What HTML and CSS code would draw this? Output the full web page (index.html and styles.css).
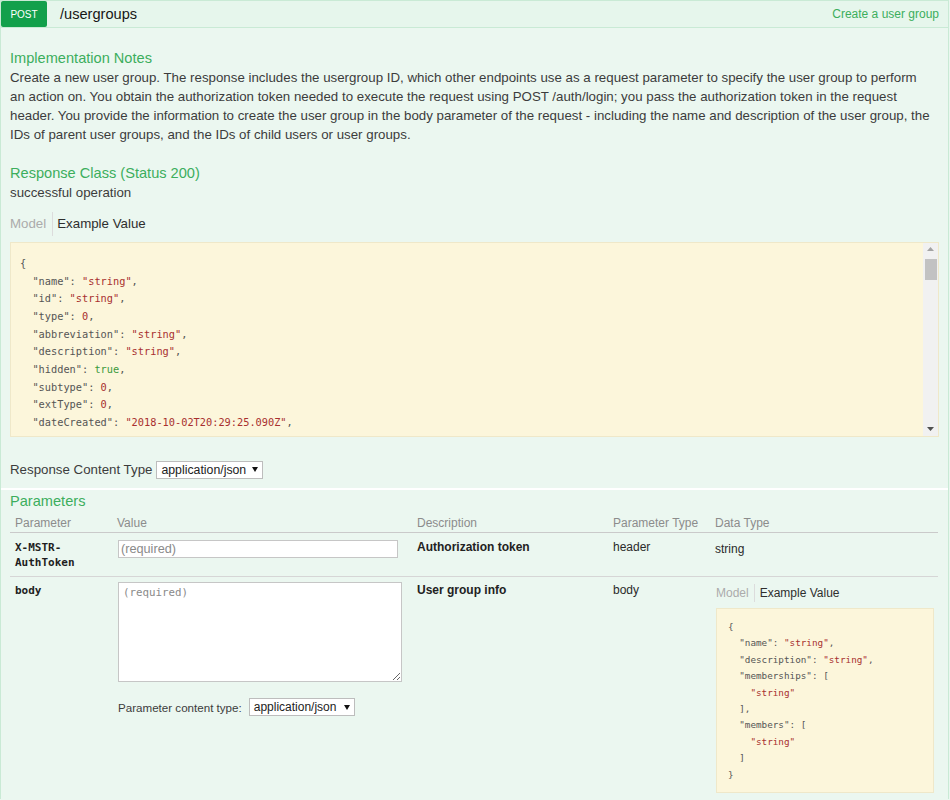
FILE: index.html
```html
<!DOCTYPE html>
<html lang="en">
<head>
<meta charset="utf-8">
<title>POST /usergroups</title>
<link rel="stylesheet" href="styles.css">
</head>
<body>
<div class="op">
  <div class="op-head">
    <span class="method">POST</span>
    <span class="path">/usergroups</span>
    <span class="summary">Create a user group</span>
  </div>

  <div class="op-body">
    <h4 class="sec-title first">Implementation Notes</h4>
    <p class="notes">Create a new user group. The response includes the usergroup ID, which other endpoints use as a request parameter to specify the user group to perform an action on. You obtain the authorization token needed to execute the request using POST /auth/login; you pass the authorization token in the request header. You provide the information to create the user group in the body parameter of the request - including the name and description of the user group, the IDs of parent user groups, and the IDs of child users or user groups.</p>

    <h4 class="sec-title">Response Class (Status 200)</h4>
    <div class="resp-msg">successful operation</div>

    <div class="tabs">
      <span class="tab tab-off">Model</span>
      <span class="tab tab-on">Example Value</span>
    </div>

    <div class="snippet snippet-lg">
      <div class="code">
        <span class="ln">{</span>
        <span class="ln in1"><span class="k">"name"</span>: <span class="s">"string"</span>,</span>
        <span class="ln in1"><span class="k">"id"</span>: <span class="s">"string"</span>,</span>
        <span class="ln in1"><span class="k">"type"</span>: <span class="s">0</span>,</span>
        <span class="ln in1"><span class="k">"abbreviation"</span>: <span class="s">"string"</span>,</span>
        <span class="ln in1"><span class="k">"description"</span>: <span class="s">"string"</span>,</span>
        <span class="ln in1"><span class="k">"hidden"</span>: <span class="b">true</span>,</span>
        <span class="ln in1"><span class="k">"subtype"</span>: <span class="s">0</span>,</span>
        <span class="ln in1"><span class="k">"extType"</span>: <span class="s">0</span>,</span>
        <span class="ln in1"><span class="k">"dateCreated"</span>: <span class="s">"2018-10-02T20:29:25.090Z"</span>,</span>
        <span class="ln in1"><span class="k">"dateModified"</span>: <span class="s">"2018-10-02T20:29:25.090Z"</span>,</span>
      </div>
      <div class="vscroll">
        <svg class="arrow-up" width="7" height="4" viewBox="0 0 7 4"><path d="M0 4 L3.5 0 L7 4 Z" fill="#a3a3a3"/></svg>
        <div class="thumb"></div>
        <div class="track-fill"></div>
        <svg class="arrow-down" width="7" height="4" viewBox="0 0 7 4"><path d="M0 0 L7 0 L3.5 4 Z" fill="#505050"/></svg>
      </div>
    </div>

    <div class="ctype-row">
      <span>Response Content Type</span>
      <span class="fselect"><span>application/json</span><svg width="6" height="5" viewBox="0 0 6 5"><path d="M0 0 L6 0 L3 5 Z" fill="#111"/></svg></span>
    </div>
  </div>

  <div class="params">
    <h4 class="sec-title">Parameters</h4>
    <div class="ptable">
      <div class="prow phead">
        <div class="cell">Parameter</div>
        <div class="cell">Value</div>
        <div class="cell">Description</div>
        <div class="cell">Parameter Type</div>
        <div class="cell">Data Type</div>
      </div>

      <div class="prow prow-1">
        <div class="cell pname"><span class="ln">X-MSTR-</span><span class="ln">AuthToken</span></div>
        <div class="cell"><input class="pinput" type="text" placeholder="(required)"></div>
        <div class="cell pdesc">Authorization token</div>
        <div class="cell ptext">header</div>
        <div class="cell ptext ptype">string</div>
      </div>

      <div class="prow prow-2">
        <div class="cell pname">body</div>
        <div class="cell">
          <textarea class="pbody" placeholder="(required)"></textarea>
          <div class="pctype">
            <span>Parameter content type:</span>
            <span class="fselect fselect-sm"><span>application/json</span><svg width="6" height="5" viewBox="0 0 6 5"><path d="M0 0 L6 0 L3 5 Z" fill="#111"/></svg></span>
          </div>
        </div>
        <div class="cell pdesc">User group info</div>
        <div class="cell ptext">body</div>
        <div class="cell dtype">
          <div class="tabs tabs-sm">
            <span class="tab tab-off">Model</span>
            <span class="tab tab-on">Example Value</span>
          </div>
          <div class="snippet snippet-sm">
            <div class="code code-sm">
              <span class="ln">{</span>
              <span class="ln in1"><span class="k">"name"</span>: <span class="s">"string"</span>,</span>
              <span class="ln in1"><span class="k">"description"</span>: <span class="s">"string"</span>,</span>
              <span class="ln in1"><span class="k">"memberships"</span>: [</span>
              <span class="ln in2"><span class="s">"string"</span></span>
              <span class="ln in1">],</span>
              <span class="ln in1"><span class="k">"members"</span>: [</span>
              <span class="ln in2"><span class="s">"string"</span></span>
              <span class="ln in1">]</span>
              <span class="ln">}</span>
            </div>
          </div>
        </div>
      </div>
    </div>
  </div>
</div>
</body>
</html>
```

FILE: styles.css
```css
html, body {
  margin: 0;
  padding: 0;
  background: #ebf7f0;
}

body {
  font-family: "Liberation Sans", Arial, sans-serif;
  color: #3c3c3c;
}

.op {
  width: 949px;
  box-sizing: border-box;
  border: 1px solid #c9ead5;
  border-bottom: none;
  background: #ebf7f0;
}

/* ---------- heading bar ---------- */
.op-head {
  display: flex;
  align-items: center;
  height: 26px;
  background: #e6f6ec;
  border-bottom: 1px solid #c9ead5;
}

.method {
  width: 46px;
  height: 26px;
  display: flex;
  align-items: center;
  justify-content: center;
  background: #12a04b;
  color: #fff;
  font-size: 10px;
  border-radius: 2px;
}

.path {
  margin-left: 13px;
  font-size: 14.6px;
  color: #161616;
}

.summary {
  margin-left: auto;
  margin-right: 9px;
  font-size: 12px;
  color: #3cae5d;
}

/* ---------- body ---------- */
.op-body {
  padding: 21px 9px 9px;
}

.sec-title {
  margin: 0;
  font-size: 14.6px;
  line-height: 18px;
  font-weight: normal;
  color: #3cae5d;
}

.notes {
  margin: 1px 0 20px;
  max-width: 924px;
  font-size: 13.3px;
  line-height: 19px;
}

.resp-msg {
  margin-top: 1px;
  font-size: 13.3px;
  line-height: 20px;
}

.tabs {
  display: flex;
  align-items: center;
  height: 24px;
  margin-top: 9px;
  font-size: 13.3px;
}

.tab {
  display: block;
  line-height: 24px;
}

.tab-off {
  color: #ababab;
  padding-right: 6px;
  border-right: 1px solid #dcdcdc;
}

.tab-on {
  color: #2e2e2e;
  padding-left: 4px;
}

.snippet {
  background: #fcf6db;
  border: 1px solid #efe8c9;
  box-sizing: border-box;
}

.snippet-lg {
  display: flex;
  height: 195px;
  margin-top: 6px;
}

.code {
  font-family: "DejaVu Sans Mono", "Liberation Mono", monospace;
  color: #555;
}

.ln {
  display: block;
  white-space: pre;
}

.in1 { padding-left: 2ch; }
.in2 { padding-left: 4ch; }

.snippet-lg .code {
  flex: 1;
  overflow: hidden;
  padding: 12px 9px 0;
  font-size: 10.3px;
  line-height: 17.65px;
}

.k { color: #555; }
.s { color: #a8302f; }
.b { color: #3b9a3b; }

.vscroll {
  width: 15px;
  background: #f1f1f1;
  display: flex;
  flex-direction: column;
  align-items: center;
}

.arrow-up {
  margin-top: 4px;
  flex: none;
}

.thumb {
  width: 12px;
  height: 21px;
  margin-top: 8px;
  background: #c2c2c2;
}

.track-fill {
  flex: 1;
}

.arrow-down {
  margin-bottom: 5px;
  flex: none;
}

.ctype-row {
  display: flex;
  align-items: center;
  gap: 4px;
  height: 19px;
  margin-top: 23px;
  font-size: 13.3px;
}

.fselect {
  display: inline-flex;
  align-items: center;
  gap: 6px;
  height: 18px;
  box-sizing: border-box;
  padding: 0 4px 0 4px;
  border: 1px solid #bdbdbd;
  background: #fff;
  color: #222;
  font-size: 12.3px;
}

/* ---------- parameters ---------- */
.params {
  border-top: 2px solid #fff;
  padding: 2px 10px 0 9px;
}

.prow {
  display: grid;
  grid-template-columns: 102px 300px 196px 102px 1fr;
  border-bottom: 1px solid #d6d6d6;
}

.cell {
  padding: 0 5px;
  font-size: 12px;
  line-height: 15px;
}

.phead {
  padding-top: 5px;
  border-bottom-color: #cacaca;
}

.phead .cell {
  color: #8c8c8c;
  line-height: 17px;
}

.prow-1 {
  padding: 7px 0 6px;
}

.prow-2 {
  padding: 6px 0 6px;
  border-bottom: none;
}

.pname {
  font-family: "DejaVu Sans Mono", "Liberation Mono", monospace;
  font-weight: bold;
  font-size: 11px;
  color: #1e1e1e;
}

.pdesc {
  font-weight: bold;
  color: #222;
}

.ptext {
  color: #2a2a2a;
}

.ptype {
  padding-top: 2px;
}

.pinput {
  display: block;
  width: 280px;
  height: 18px;
  box-sizing: border-box;
  margin: 0 0 0 1px;
  padding: 0 2px;
  border: 1px solid #c6c6c6;
  background: #fff;
  font-family: "Liberation Sans", Arial, sans-serif;
  font-size: 12.7px;
}

.pinput::placeholder {
  color: #8a8a8a;
}

.pbody {
  display: block;
  width: 284px;
  height: 100px;
  box-sizing: border-box;
  margin: -1px 0 0 1px;
  padding: 3px 4px;
  border: 1px solid #c6c6c6;
  background: #fff;
  font-family: "DejaVu Sans Mono", "Liberation Mono", monospace;
  font-size: 10.8px;
  line-height: 14px;
}

.pbody::placeholder {
  color: #8a8a8a;
}

.pctype {
  display: flex;
  align-items: center;
  gap: 7px;
  margin: 16px 0 0 1px;
  font-size: 11.6px;
  color: #3c3c3c;
}

.fselect-sm {
  gap: 8px;
  font-size: 12px;
}

.dtype {
  padding-left: 6px;
  padding-right: 4px;
}

.tabs-sm {
  height: 20px;
  margin-top: 0;
  font-size: 12px;
}

.tabs-sm .tab {
  line-height: 18px;
}

.tabs-sm .tab-off {
  padding-right: 5px;
}

.tabs-sm .tab-on {
  padding-left: 5px;
}

.snippet-sm {
  margin-top: 5px;
}

.code-sm {
  padding: 10px 11px 9px;
  font-size: 9.3px;
  line-height: 16.4px;
}
```
